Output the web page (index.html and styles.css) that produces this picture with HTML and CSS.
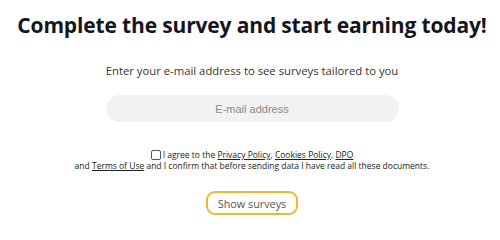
FILE: index.html
```html
<!DOCTYPE html>
<html lang="en">
<head>
<meta charset="utf-8">
<title>Survey</title>
<link rel="stylesheet" href="styles.css">
</head>
<body>
<main class="signup">
  <h1 class="title">Complete the survey and start earning today!</h1>
  <p class="lead">Enter your e-mail address to see surveys tailored to you</p>
  <input class="email" type="email" placeholder="E-mail address">
  <div class="consent">
    <div class="line"><span class="box"></span>I agree to the <a href="#">Privacy Policy</a>, <a href="#">Cookies Policy</a>, <a href="#">DPO</a></div>
    <div class="line">and <a href="#">Terms of Use</a> and I confirm that before sending data I have read all these documents.</div>
  </div>
  <button class="show" type="button">Show surveys</button>
</main>
</body>
</html>
```
FILE: styles.css
```css
html, body {
  margin: 0;
  padding: 0;
  background: #ffffff;
}
.signup {
  display: flex;
  flex-direction: column;
  align-items: center;
  padding-left: 4px;
  font-family: "Open Sans", "DejaVu Sans", sans-serif;
  color: #222;
}
.title {
  margin: 12px 0 0;
  font-size: 21px;
  line-height: 26px;
  font-weight: 700;
  color: #151521;
  letter-spacing: -0.15px;
}
.lead {
  margin: 25px 0 0;
  font-size: 11.3px;
  line-height: 16px;
  color: #333;
}
.email {
  margin-top: 16px;
  width: 293px;
  height: 27px;
  box-sizing: border-box;
  border: none;
  border-radius: 14px;
  background: #f2f2f2;
  text-align: center;
  font-family: "Liberation Sans", Arial, sans-serif;
  font-size: 11px;
  padding: 0;
}
.email::placeholder {
  color: #8a8a8a;
}
.consent {
  margin-top: 27px;
  display: flex;
  flex-direction: column;
  align-items: center;
  font-size: 8.5px;
  line-height: 11px;
  color: #222;
}
.line {
  display: flex;
  align-items: center;
  white-space: pre;
}
.consent a {
  color: #222;
  text-decoration: underline;
}
.box {
  width: 8px;
  height: 8px;
  border: 1px solid #555;
  border-radius: 2px;
  margin-right: 2px;
}
.show {
  margin-top: 20px;
  width: 92px;
  height: 24px;
  box-sizing: border-box;
  border: 2px solid #f6b42a;
  border-radius: 9px;
  background: #fff;
  font-family: "Open Sans", "DejaVu Sans", sans-serif;
  font-size: 10.8px;
  color: #555;
  padding: 0;
}
```
